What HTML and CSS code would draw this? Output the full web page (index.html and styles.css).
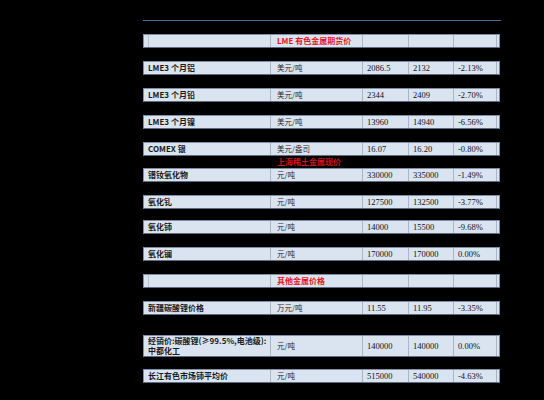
FILE: index.html
```html
<!DOCTYPE html>
<html>
<head>
<meta charset="utf-8">
<link rel="stylesheet" href="styles.css">
</head>
<body>
<div class="page">
  <div class="rule"></div>

  <div class="row hdr r-hdr1">
    <div class="c c1 inner"></div><div class="c c2 red">LME 有色金属期货价</div><div class="c c3"></div><div class="c c4"></div><div class="c c5"></div><div class="c c6"></div>
  </div>

  <div class="row r-gap">
    <div class="c c1">LME3 个月铝</div><div class="c c2">美元/吨</div><div class="c c3">2086.5</div><div class="c c4">2132</div><div class="c c5">-2.13%</div><div class="c c6"></div>
  </div>
  <div class="row r-gap">
    <div class="c c1">LME3 个月铅</div><div class="c c2">美元/吨</div><div class="c c3">2344</div><div class="c c4">2409</div><div class="c c5">-2.70%</div><div class="c c6"></div>
  </div>
  <div class="row r-gap">
    <div class="c c1">LME3 个月镍</div><div class="c c2">美元/吨</div><div class="c c3">13960</div><div class="c c4">14940</div><div class="c c5">-6.56%</div><div class="c c6"></div>
  </div>
  <div class="row r-gap">
    <div class="c c1">COMEX 银</div><div class="c c2">美元/盎司</div><div class="c c3">16.07</div><div class="c c4">16.20</div><div class="c c5">-0.80%</div><div class="c c6"></div>
  </div>

  <div class="section">上海稀土金属现价</div>

  <div class="row">
    <div class="c c1">镨钕氧化物</div><div class="c c2">元/吨</div><div class="c c3">330000</div><div class="c c4">335000</div><div class="c c5">-1.49%</div><div class="c c6"></div>
  </div>
  <div class="row r-gap">
    <div class="c c1">氧化钆</div><div class="c c2">元/吨</div><div class="c c3">127500</div><div class="c c4">132500</div><div class="c c5">-3.77%</div><div class="c c6"></div>
  </div>
  <div class="row r-gap2">
    <div class="c c1">氧化铈</div><div class="c c2">元/吨</div><div class="c c3">14000</div><div class="c c4">15500</div><div class="c c5">-9.68%</div><div class="c c6"></div>
  </div>
  <div class="row r-gap">
    <div class="c c1">氧化镧</div><div class="c c2">元/吨</div><div class="c c3">170000</div><div class="c c4">170000</div><div class="c c5">0.00%</div><div class="c c6"></div>
  </div>

  <div class="row hdr r-gap">
    <div class="c c1 inner"></div><div class="c c2 red">其他金属价格</div><div class="c c3"></div><div class="c c4"></div><div class="c c5"></div><div class="c c6"></div>
  </div>

  <div class="row r-gap">
    <div class="c c1">新疆碳酸锂价格</div><div class="c c2">万元/吨</div><div class="c c3">11.55</div><div class="c c4">11.95</div><div class="c c5">-3.35%</div><div class="c c6"></div>
  </div>

  <div class="row tall r-gap3">
    <div class="c c1 two">经销价:碳酸锂(≥99.5%,电池级):<br>中都化工</div><div class="c c2">元/吨</div><div class="c c3">140000</div><div class="c c4">140000</div><div class="c c5">0.00%</div><div class="c c6"></div>
  </div>

  <div class="row r-gap4">
    <div class="c c1">长江有色市场铈平均价</div><div class="c c2">元/吨</div><div class="c c3">515000</div><div class="c c4">540000</div><div class="c c5">-4.63%</div><div class="c c6"></div>
  </div>
</div>
</body>
</html>
```

FILE: styles.css
```css
html, body {
  margin: 0;
  padding: 0;
  background: #000;
}
body {
  width: 544px;
  height: 400px;
  overflow: hidden;
}
.page {
  padding-left: 143px;
  padding-top: 20px;
  width: 358px;
  display: flex;
  flex-direction: column;
}
.rule {
  height: 1px;
  background: #4a6c9c;
  width: 358px;
}
.row {
  display: grid;
  grid-template-columns: 127px 92px 46px 45px 43px 1fr;
  height: 14px;
  box-sizing: border-box;
  background: #dae4f0;
  border: 1px solid #7d8ea6;
  border-bottom-color: #5e6c80;
  width: 357px;
}
.r-hdr1 { margin-top: 13px; }
.r-gap { margin-top: 13px; }
.r-gap2 { margin-top: 11px; }
.r-gap3 { margin-top: 20px; }
.r-gap4 { margin-top: 12px; }
.tall { height: 22px; }
.c {
  border-right: 1px solid #aab6c6;
  font-family: "Liberation Serif", "Noto Sans CJK SC", serif;
  font-size: 8.5px;
  line-height: 12px;
  color: #111;
  white-space: nowrap;
  overflow: hidden;
  padding-left: 4px;
}
.tall .c { line-height: 20px; }
.c6 { border-right: none; }
.c1 {
  font-family: "Noto Sans CJK SC", sans-serif;
  font-weight: 700;
  font-size: 8px;
  padding-left: 4px;
  color: #1a1a1a;
}
.c1.inner { box-shadow: inset 4px 0 0 #dae4f0, inset 5px 0 0 #b7c2d0; }
.tall .c1.two {
  line-height: 10px;
  white-space: nowrap;
}
.c2 {
  font-family: "Noto Sans CJK SC", sans-serif;
  font-weight: 400;
  font-size: 7.5px;
  color: #2a2a2a;
  padding-left: 6px;
}
.c2.red {
  color: #e8141e;
  font-weight: 700;
  font-size: 8px;
}
.c3, .c4, .c5 { padding-left: 4px; }
.section {
  height: 12px;
  line-height: 12px;
  padding-left: 134px;
  font-family: "Noto Sans CJK SC", sans-serif;
  font-weight: 700;
  font-size: 8px;
  color: #d8121a;
}
```
